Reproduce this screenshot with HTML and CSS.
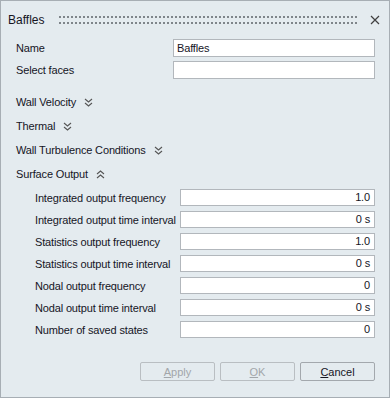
FILE: index.html
```html
<!DOCTYPE html>
<html lang="en">

<head>
    <meta charset="UTF-8">
    <meta name="viewport" content="width=device-width, initial-scale=1.0">
    <title>Baffles</title>
    <link rel="stylesheet" href="styles.css">
</head>

<body>
    <div class="dialog">
        <div class="titlebar">
            <span class="title">Baffles</span>
            <span class="grip"></span>
            <svg class="close" width="10" height="10" viewBox="0 0 10 10">
                <path d="M1 1 L9 9 M9 1 L1 9" stroke="#404040" stroke-width="1.2" fill="none" />
            </svg>
        </div>

        <div class="content">
            <div class="field">
                <label>Name</label>
                <div class="box">Baffles</div>
            </div>
            <div class="field">
                <label>Select faces</label>
                <div class="box"></div>
            </div>

            <div class="section">Wall Velocity
                <svg class="chevron" width="9" height="9" viewBox="0 0 9 9">
                    <path d="M1 1 L4.5 4 L8 1 M1 5 L4.5 8 L8 5" stroke="#555" stroke-width="1.1" fill="none" />
                </svg>
            </div>
            <div class="section">Thermal
                <svg class="chevron" width="9" height="9" viewBox="0 0 9 9">
                    <path d="M1 1 L4.5 4 L8 1 M1 5 L4.5 8 L8 5" stroke="#555" stroke-width="1.1" fill="none" />
                </svg>
            </div>
            <div class="section">Wall Turbulence Conditions
                <svg class="chevron" width="9" height="9" viewBox="0 0 9 9">
                    <path d="M1 1 L4.5 4 L8 1 M1 5 L4.5 8 L8 5" stroke="#555" stroke-width="1.1" fill="none" />
                </svg>
            </div>
            <div class="section">Surface Output
                <svg class="chevron" width="9" height="9" viewBox="0 0 9 9">
                    <path d="M1 4 L4.5 1 L8 4 M1 8 L4.5 5 L8 8" stroke="#555" stroke-width="1.1" fill="none" />
                </svg>
            </div>

            <div class="sub-fields">
                <div class="row">
                    <label>Integrated output frequency</label>
                    <div class="box num">1.0</div>
                </div>
                <div class="row">
                    <label>Integrated output time interval</label>
                    <div class="box num">0 s</div>
                </div>
                <div class="row">
                    <label>Statistics output frequency</label>
                    <div class="box num">1.0</div>
                </div>
                <div class="row">
                    <label>Statistics output time interval</label>
                    <div class="box num">0 s</div>
                </div>
                <div class="row">
                    <label>Nodal output frequency</label>
                    <div class="box num">0</div>
                </div>
                <div class="row">
                    <label>Nodal output time interval</label>
                    <div class="box num">0 s</div>
                </div>
                <div class="row">
                    <label>Number of saved states</label>
                    <div class="box num">0</div>
                </div>
            </div>
        </div>

        <div class="buttons">
            <button class="disabled"><u>A</u>pply</button>
            <button class="disabled"><u>O</u>K</button>
            <button><u>C</u>ancel</button>
        </div>
    </div>
</body>

</html>
```

FILE: styles.css
```css
* {
    margin: 0;
    padding: 0;
    box-sizing: border-box;
    font-family: 'Liberation Sans', Arial, sans-serif;
}

body {
    background: #fff;
}

.dialog {
    width: 390px;
    height: 398px;
    background: #e4ebef;
    border: 1px solid #a7aeb4;
    display: flex;
    flex-direction: column;
    color: #15151f;
    font-size: 11px;
    letter-spacing: -0.15px;
}

.titlebar {
    height: 38px;
    display: flex;
    align-items: center;
    padding: 0 9px 0 7px;
}

.title {
    font-size: 12px;
    letter-spacing: 0;
}

.grip {
    flex: 1;
    height: 8px;
    margin: 0 13px 0 14px;
    background-image: radial-gradient(circle, #7f858a 0.9px, transparent 1.2px);
    background-size: 4px 6px;
    background-position: 0 -2px;
}

.close {
    display: block;
}

.content {
    flex: 1;
    padding: 0 14px 0 15px;
}

.field {
    display: flex;
    align-items: center;
    height: 18px;
    margin-bottom: 4px;
}

.field label {
    width: 157px;
}

.box {
    flex: 1;
    height: 18px;
    background: #fff;
    border: 1px solid #b2b7bc;
    padding: 0 4px 0 3px;
    line-height: 16px;
    white-space: nowrap;
}

.section {
    display: flex;
    align-items: center;
    gap: 8px;
    height: 24px;
}

.field + .section {
    margin-top: 11px;
}

.chevron {
    display: block;
}

.sub-fields {
    padding: 3px 0 0 19px;
    display: flex;
    flex-direction: column;
    gap: 5px;
}

.row {
    display: flex;
    align-items: center;
    height: 17px;
}

.row label {
    width: 145px;
    white-space: nowrap;
}

.row .box {
    height: 17px;
    line-height: 15px;
}

.num {
    text-align: right;
}

.buttons {
    display: flex;
    justify-content: flex-end;
    gap: 5px;
    padding: 0 14px 16px 0;
}

button {
    width: 75px;
    height: 19px;
    border: 1px solid #a3a8ad;
    border-radius: 2px;
    background: #e4ebef;
    font-size: 11px;
    color: #15151f;
}

button.disabled {
    color: #a2a6aa;
    border-color: #b9bec2;
}
```
